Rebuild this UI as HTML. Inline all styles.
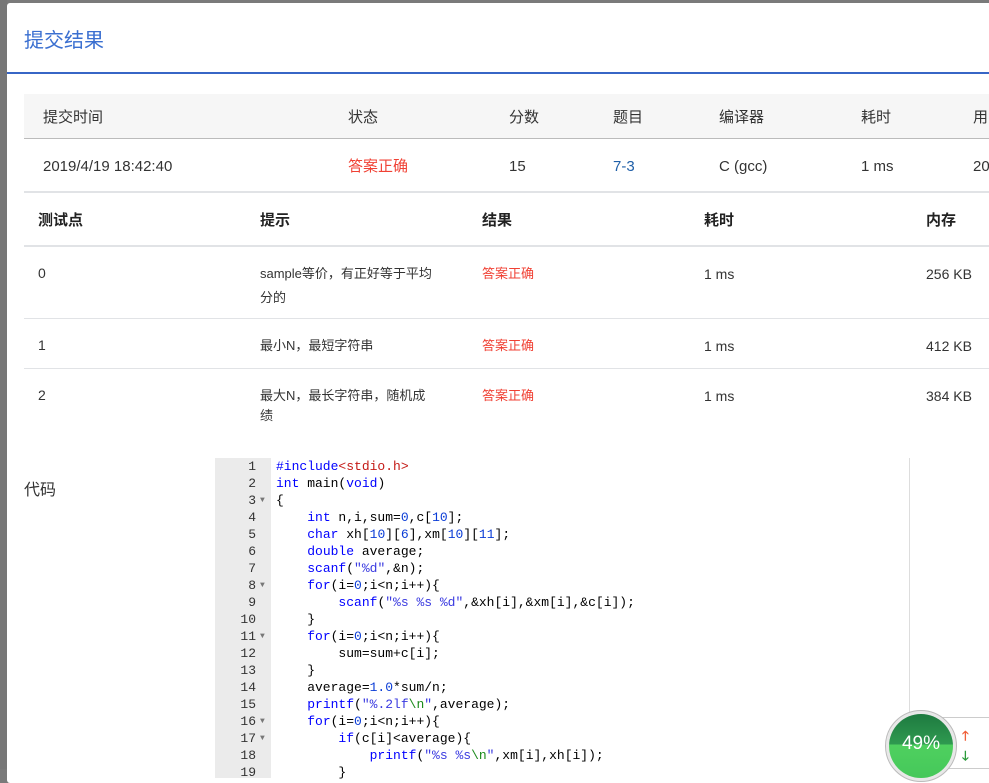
<!DOCTYPE html>
<html><head><meta charset="utf-8"><style>
*{margin:0;padding:0;box-sizing:border-box}
body{width:989px;height:769px;overflow:hidden;background:#7a7a7a;font-family:"Liberation Sans","Noto Sans CJK SC",sans-serif;color:#333;position:relative}
.m{position:absolute;left:7px;top:3px;width:990px;height:780px;background:#fff;border-radius:3px}
.a{position:absolute;white-space:nowrap;line-height:20px}
.h{font-size:15px;color:#333}
.b{font-weight:bold;font-size:15px;color:#222}
.t{font-size:15px;color:#333}
.s{font-size:13px;color:#333}
.r{color:#f04134}
.code{position:absolute;left:215px;top:458px;width:695px;height:320px;border-right:1px solid #ddd;font-family:"Liberation Mono","DejaVu Sans Mono",monospace;font-size:13px}
.g{position:absolute;left:0;top:0;width:56px;height:320px;background:#ebebeb}
.ln{position:absolute;left:0;width:41px;text-align:right;color:#333;line-height:17px;height:17px}
.cl{position:absolute;left:61px;line-height:17px;height:17px;white-space:pre;color:#000}
.k{color:#0000ff}.str{color:#3a3ae0}.inc{color:#c41a16}.n{color:#0a3cd6}.e{color:#1a8a1a}
.fa{position:absolute;left:45px;font-size:8px;color:#777}
</style></head><body>
<div class="a" style="left:0;top:0;width:7px;height:769px;background:#777"></div>
<div class="m"></div>
<div class="a" style="left:24px;top:29px;font-size:20px;line-height:24px;color:#3a6fd0">提交结果</div>
<div class="a" style="left:7px;top:72px;width:982px;height:2px;background:#3766c6"></div>

<div class="a" style="left:24px;top:94px;width:965px;height:45px;background:#f6f6f6;border-bottom:1px solid #bbb"></div>
<div class="a h" style="left:43px;top:108px">提交时间</div>
<div class="a h" style="left:348px;top:108px">状态</div>
<div class="a h" style="left:509px;top:108px">分数</div>
<div class="a h" style="left:613px;top:108px">题目</div>
<div class="a h" style="left:719px;top:108px">编译器</div>
<div class="a h" style="left:861px;top:108px">耗时</div>
<div class="a h" style="left:973px;top:108px">用</div>

<div class="a t" style="left:43px;top:157px">2019/4/19 18:42:40</div>
<div class="a t r" style="left:348px;top:157px">答案正确</div>
<div class="a t" style="left:509px;top:157px">15</div>
<div class="a t" style="left:613px;top:157px;color:#1f5fa8">7-3</div>
<div class="a t" style="left:719px;top:157px">C (gcc)</div>
<div class="a t" style="left:861px;top:157px">1 ms</div>
<div class="a t" style="left:973px;top:157px">20</div>
<div class="a" style="left:24px;top:191px;width:965px;height:2px;background:#e1e3e6"></div>

<div class="a b" style="left:38px;top:211px">测试点</div>
<div class="a b" style="left:260px;top:211px">提示</div>
<div class="a b" style="left:482px;top:211px">结果</div>
<div class="a b" style="left:704px;top:211px">耗时</div>
<div class="a b" style="left:926px;top:211px">内存</div>
<div class="a" style="left:24px;top:245px;width:965px;height:2px;background:#e1e3e6"></div>

<div class="a t" style="left:38px;top:263px;font-size:14px">0</div>
<div class="a s" style="left:260px;top:262px;line-height:24px">sample等价，有正好等于平均<br>分的</div>
<div class="a s r" style="left:482px;top:264px">答案正确</div>
<div class="a s" style="left:704px;top:264px;font-size:14px">1 ms</div>
<div class="a s" style="left:926px;top:264px;font-size:14px">256 KB</div>
<div class="a" style="left:24px;top:318px;width:965px;height:1px;background:#e1e3e6"></div>

<div class="a t" style="left:38px;top:335px;font-size:14px">1</div>
<div class="a s" style="left:260px;top:336px">最小N，最短字符串</div>
<div class="a s r" style="left:482px;top:336px">答案正确</div>
<div class="a s" style="left:704px;top:336px;font-size:14px">1 ms</div>
<div class="a s" style="left:926px;top:336px;font-size:14px">412 KB</div>
<div class="a" style="left:24px;top:368px;width:965px;height:1px;background:#e1e3e6"></div>

<div class="a t" style="left:38px;top:385px;font-size:14px">2</div>
<div class="a s" style="left:260px;top:386px;line-height:20px">最大N，最长字符串，随机成<br>绩</div>
<div class="a s r" style="left:482px;top:386px">答案正确</div>
<div class="a s" style="left:704px;top:386px;font-size:14px">1 ms</div>
<div class="a s" style="left:926px;top:386px;font-size:14px">384 KB</div>

<div class="a" style="left:24px;top:481px;font-size:16px;color:#333">代码</div>

<div class="code">
<div class="g"></div>
<div class="ln" style="top:0">1</div><div class="cl" style="top:0"><span class="k">#include</span><span class="inc">&lt;stdio.h&gt;</span></div>
<div class="ln" style="top:17px">2</div><div class="cl" style="top:17px"><span class="k">int</span> main(<span class="k">void</span>)</div>
<div class="ln" style="top:34px">3</div><div class="fa" style="top:38px">▼</div><div class="cl" style="top:34px">{</div>
<div class="ln" style="top:51px">4</div><div class="cl" style="top:51px">    <span class="k">int</span> n,i,sum=<span class="n">0</span>,c[<span class="n">10</span>];</div>
<div class="ln" style="top:68px">5</div><div class="cl" style="top:68px">    <span class="k">char</span> xh[<span class="n">10</span>][<span class="n">6</span>],xm[<span class="n">10</span>][<span class="n">11</span>];</div>
<div class="ln" style="top:85px">6</div><div class="cl" style="top:85px">    <span class="k">double</span> average;</div>
<div class="ln" style="top:102px">7</div><div class="cl" style="top:102px">    <span class="k">scanf</span>(<span class="str">"%d"</span>,&amp;n);</div>
<div class="ln" style="top:119px">8</div><div class="fa" style="top:123px">▼</div><div class="cl" style="top:119px">    <span class="k">for</span>(i=<span class="n">0</span>;i&lt;n;i++){</div>
<div class="ln" style="top:136px">9</div><div class="cl" style="top:136px">        <span class="k">scanf</span>(<span class="str">"%s %s %d"</span>,&amp;xh[i],&amp;xm[i],&amp;c[i]);</div>
<div class="ln" style="top:153px">10</div><div class="cl" style="top:153px">    }</div>
<div class="ln" style="top:170px">11</div><div class="fa" style="top:174px">▼</div><div class="cl" style="top:170px">    <span class="k">for</span>(i=<span class="n">0</span>;i&lt;n;i++){</div>
<div class="ln" style="top:187px">12</div><div class="cl" style="top:187px">        sum=sum+c[i];</div>
<div class="ln" style="top:204px">13</div><div class="cl" style="top:204px">    }</div>
<div class="ln" style="top:221px">14</div><div class="cl" style="top:221px">    average=<span class="n">1.0</span>*sum/n;</div>
<div class="ln" style="top:238px">15</div><div class="cl" style="top:238px">    <span class="k">printf</span>(<span class="str">"%.2lf<span class="e">\n</span>"</span>,average);</div>
<div class="ln" style="top:255px">16</div><div class="fa" style="top:259px">▼</div><div class="cl" style="top:255px">    <span class="k">for</span>(i=<span class="n">0</span>;i&lt;n;i++){</div>
<div class="ln" style="top:272px">17</div><div class="fa" style="top:276px">▼</div><div class="cl" style="top:272px">        <span class="k">if</span>(c[i]&lt;average){</div>
<div class="ln" style="top:289px">18</div><div class="cl" style="top:289px">            <span class="k">printf</span>(<span class="str">"%s %s<span class="e">\n</span>"</span>,xm[i],xh[i]);</div>
<div class="ln" style="top:306px">19</div><div class="cl" style="top:306px">        }</div>
</div>

<div class="a" style="left:910px;top:717px;width:79px;height:52px;background:#fff;border:1px solid #ccc;border-right:none"></div>
<div class="a" style="left:962px;top:726px;color:#f0603a;font-size:13px;font-weight:bold">🡑</div>
<div class="a" style="left:962px;top:746px;color:#2a9a3a;font-size:13px;font-weight:bold">🡓</div>
<div class="a" style="left:885px;top:710px;width:72px;height:72px;border-radius:50%;background:#e8e8e8;border:1px solid #bbb"></div>
<div class="a" style="left:889px;top:714px;width:64px;height:64px;border-radius:50%;overflow:hidden;background:linear-gradient(#1e7a40 0%,#2f9a50 48%,#4fd05f 48%,#45c85a 100%)"></div>
<div class="a" style="left:898px;top:734px;width:46px;text-align:center;color:#fff;font-size:19px">49%</div>
</body></html>
